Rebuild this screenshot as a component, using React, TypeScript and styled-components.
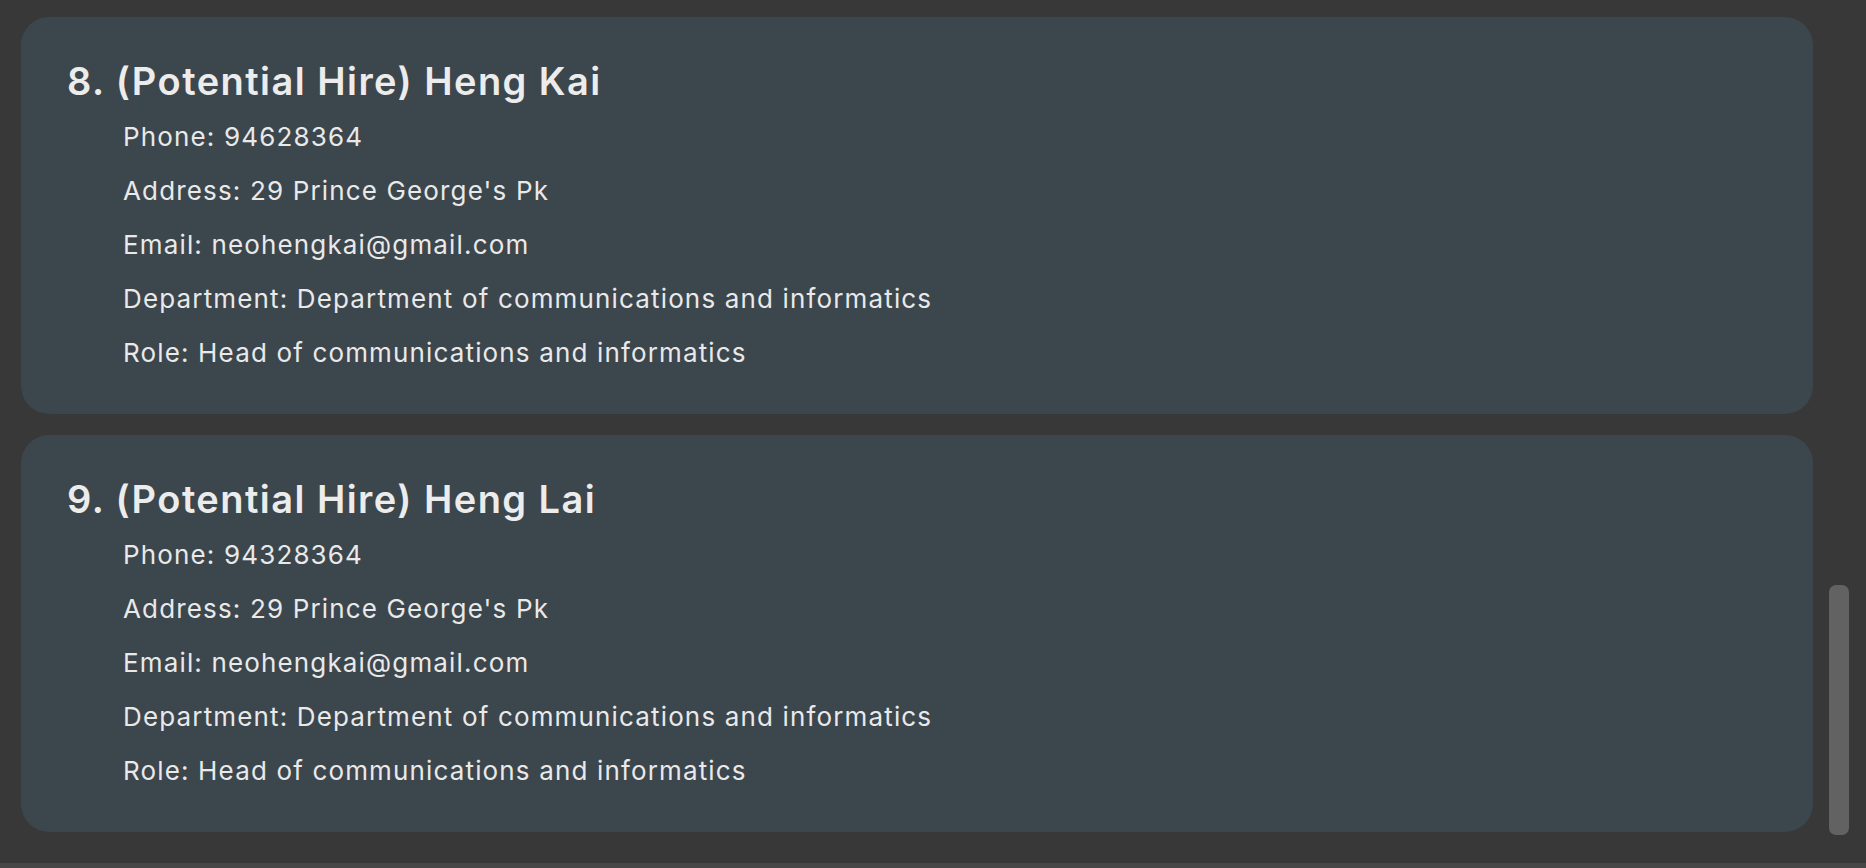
import React from "react";
import styled, { createGlobalStyle } from "styled-components";

const Global = createGlobalStyle`
  html, body { margin: 0; padding: 0; background: #383838; }
  body { font-family: Inter, "Noto Sans", sans-serif; overflow: hidden; }
`;

const Page = styled.div`
  display: flex;
  flex-direction: column;
  height: 868px;
  background: #383838;
`;

const Content = styled.div`
  flex: 1;
  display: flex;
  flex-direction: row;
  overflow: hidden;
`;

const List = styled.div`
  flex: 1;
  display: flex;
  flex-direction: column;
  gap: 21px;
  padding: 17px 0 0 21px;
  min-width: 0;
`;

const Card = styled.section`
  background: #3c464d;
  border-radius: 28px;
  padding: 40px 24px 34px 46px;
  color: #ebebeb;
`;

const Title = styled.h2`
  margin: 0 0 5px 0;
  font-size: 38px;
  line-height: 48px;
  font-weight: 600;
  letter-spacing: 1.45px;
  color: #ececec;
`;

const Details = styled.div`
  display: flex;
  flex-direction: column;
  padding-left: 56px;
`;

const Line = styled.div`
  font-size: 26px;
  line-height: 54px;
  font-weight: 400;
  letter-spacing: 1.15px;
  color: #e9e9e9;
  white-space: nowrap;
`;

const Track = styled.div`
  width: 20px;
  margin: 0 17px 0 16px;
  display: flex;
  flex-direction: column;
  justify-content: flex-end;
  padding-bottom: 28px;
`;

const Thumb = styled.div`
  height: 250px;
  border-radius: 7px;
  background: #626262;
`;

const Footer = styled.div`
  height: 5px;
  background: #474747;
`;

type Person = {
  index: number;
  name: string;
  phone: string;
  address: string;
  email: string;
  department: string;
  role: string;
};

const people: Person[] = [
  {
    index: 8,
    name: "(Potential Hire) Heng Kai",
    phone: "94628364",
    address: "29 Prince George's Pk",
    email: "neohengkai@gmail.com",
    department: "Department of communications and informatics",
    role: "Head of communications and informatics",
  },
  {
    index: 9,
    name: "(Potential Hire) Heng Lai",
    phone: "94328364",
    address: "29 Prince George's Pk",
    email: "neohengkai@gmail.com",
    department: "Department of communications and informatics",
    role: "Head of communications and informatics",
  },
];

export default function App() {
  return (
    <Page>
      <Global />
      <Content>
        <List>
          {people.map((p) => (
            <Card key={p.index}>
              <Title>
                {p.index}. {p.name}
              </Title>
              <Details>
                <Line>Phone: {p.phone}</Line>
                <Line>Address: {p.address}</Line>
                <Line>Email: {p.email}</Line>
                <Line>Department: {p.department}</Line>
                <Line>Role: {p.role}</Line>
              </Details>
            </Card>
          ))}
        </List>
        <Track>
          <Thumb />
        </Track>
      </Content>
      <Footer />
    </Page>
  );
}
